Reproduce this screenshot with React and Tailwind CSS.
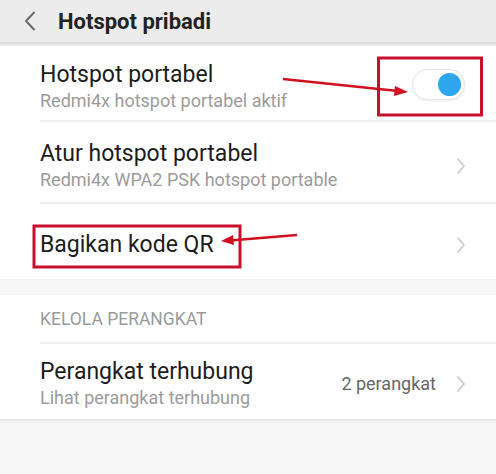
import React from 'react';

const Chevron = () => (
  <svg width="10" height="18" viewBox="0 0 10 18" className="shrink-0">
    <path d="M2 2l6 7-6 7" fill="none" stroke="#cdcdcd" strokeWidth="1.8" strokeLinecap="round" strokeLinejoin="round" />
  </svg>
);

const Divider = () => <div className="ml-[40px] h-[2px] bg-[#f0f0f0]" />;

function Row({ title, sub, right, height, pt }) {
  return (
    <div className={`flex items-center justify-between pl-[40px] pr-[30px] ${height} ${pt}`}>
      <div className="flex flex-col">
        <span className="text-[23px] leading-[28px] text-[#1c1c1c]">{title}</span>
        {sub && <span className="text-[18px] leading-[23px] text-[#9b9b9b]">{sub}</span>}
      </div>
      {right}
    </div>
  );
}

export default function App() {
  return (
    <div className="relative w-[496px] h-[474px] overflow-hidden bg-[#f7f7f7] font-['Roboto',sans-serif]">
      {/* Header */}
      <div className="h-[42px] bg-[#ececec] flex items-center">
        <svg width="14" height="20" viewBox="0 0 14 20" className="ml-[23px]">
          <path d="M11 1.5L3 10l8 8.5" fill="none" stroke="#6b6b6b" strokeWidth="2" strokeLinecap="round" strokeLinejoin="round" />
        </svg>
        <span className="ml-[21px] text-[22px] font-bold text-[#222]">Hotspot pribadi</span>
      </div>
      <div className="h-[4px] bg-gradient-to-b from-[#d6d6d6] to-[#f2f2f2]" />

      <div className="bg-white">
        <Row
          title="Hotspot portabel"
          sub="Redmi4x hotspot portabel aktif"
          height="h-[74px]"
          pt="pt-[7px]"
          right={
            <div className="mr-[1px] -mt-[5px] w-[53px] h-[31px] rounded-full bg-white border border-[#e6e6e6] shadow-[0_1px_2px_rgba(0,0,0,0.08)] flex items-center justify-end pr-[3px]">
              <div className="w-[23px] h-[23px] rounded-full bg-[#2da6ee]" />
            </div>
          }
        />
        <Divider />
        <Row
          title="Atur hotspot portabel"
          sub="Redmi4x WPA2 PSK hotspot portable"
          height="h-[80px]"
          pt="pt-[7px]"
          right={<Chevron />}
        />
        <Divider />
        <Row title="Bagikan kode QR" height="h-[75px]" pt="pt-[6px]" right={<Chevron />} />
      </div>

      <div className="h-[16px]" />

      <div className="bg-white">
        <div className="h-[47px] pl-[40px] flex items-center pt-[2px]">
          <span className="text-[17.5px] text-[#9a9a9a]">KELOLA PERANGKAT</span>
        </div>
        <Divider />
        <Row
          title="Perangkat terhubung"
          sub="Lihat perangkat terhubung"
          height="h-[75px]"
          pt="pt-[4px]"
          right={
            <div className="flex items-center gap-[20px]">
              <span className="text-[18px] text-[#666]">2 perangkat</span>
              <Chevron />
            </div>
          }
        />
      </div>
      <div className="h-[5px] bg-gradient-to-b from-[#e6e6e6] to-[#f7f7f7]" />

      {/* Annotations */}
      <svg className="absolute inset-0 pointer-events-none" width="496" height="474" viewBox="0 0 496 474">
        <rect x="378.5" y="58" width="103" height="57" fill="none" stroke="#c8102e" strokeWidth="3" />
        <rect x="34" y="226" width="206" height="41" fill="none" stroke="#c8102e" strokeWidth="3" />
        <line x1="283" y1="79" x2="398" y2="91" stroke="#d0101f" strokeWidth="2.5" />
        <path d="M408 92l-13 -6 -1 10z" fill="#d0101f" />
        <line x1="297" y1="235" x2="230" y2="240.5" stroke="#d0101f" strokeWidth="2.5" />
        <path d="M221 241l12 -6 1 10z" fill="#d0101f" />
      </svg>
    </div>
  );
}
